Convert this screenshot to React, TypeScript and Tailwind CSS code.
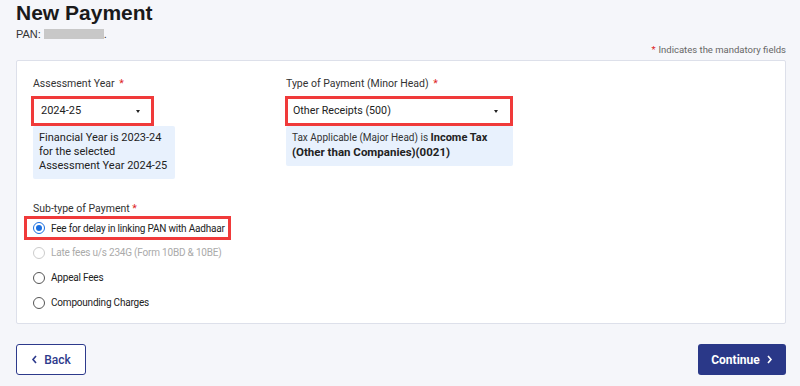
export default function App() {
  const subtypes = [
    { label: "Fee for delay in linking PAN with Aadhaar", checked: true, disabled: false },
    { label: "Late fees u/s 234G (Form 10BD & 10BE)", checked: false, disabled: true },
    { label: "Appeal Fees", checked: false, disabled: false },
    { label: "Compounding Charges", checked: false, disabled: false },
  ];

  return (
    <main
      className="w-[800px] h-[386px] bg-[#f5f6fa] pl-4 overflow-hidden text-[#222]"
      style={{ fontFamily: "Roboto, 'Liberation Sans', sans-serif" }}
    >
      <div className="w-[770px]">
        <h1 className="pt-[1px] text-[21px] leading-[24px] font-bold text-[#1a1a1a] [font-family:'Liberation_Sans',Arial,sans-serif]">
          New Payment
        </h1>
        <div className="flex items-center h-[14px] mt-[2px] text-[11px] text-[#333] [font-family:'Liberation_Sans',Arial,sans-serif]">
          PAN:
          <span className="inline-block ml-[3px] w-[60px] h-[10px] bg-[#c8c8c8]"></span>
          <span>.</span>
        </div>
        <div className="flex justify-end mt-[2px] h-[14px] text-[9.5px] leading-[14px] text-[#666]">
          <span className="text-[#d22] mr-[3px]">*</span>Indicates the mandatory fields
        </div>

        <section className="mt-[3px] h-[264px] bg-white border border-[#dde0ea] rounded-[2px] px-[16px] pt-[16px]">
          <div className="flex">
            <div className="w-[253px]">
              <label className="block text-[10.5px] leading-[14px] text-[#333]">
                Assessment Year <span className="text-[#d22] ml-[2px]">*</span>
              </label>
              <div className="mt-[5px] ml-[-2px] w-[123px] h-[30px] border-[3px] border-[#f03a3a] bg-white flex items-center justify-between px-[7px]">
                <span className="text-[11px] text-[#222]">2024-25</span>
                <span className="w-0 h-0 border-l-[2.5px] border-r-[2.5px] border-t-[3px] border-l-transparent border-r-transparent border-t-[#222] mr-[4px]"></span>
              </div>
              <div className="w-[142px] bg-[#e8f1fd] rounded-[2px] px-[6px] pt-[5px] pb-[6px] text-[11px] leading-[14px] text-[#222]">
                Financial Year is 2023-24
                <br />
                for the selected
                <br />
                Assessment Year 2024-25
              </div>
            </div>
            <div>
              <label className="block text-[10.5px] leading-[14px] text-[#333]">
                Type of Payment (Minor Head) <span className="text-[#d22] ml-[2px]">*</span>
              </label>
              <div className="mt-[5px] ml-[-1px] w-[228px] h-[30px] border-[3px] border-[#f03a3a] bg-white flex items-center justify-between px-[5px]">
                <span className="text-[10.7px] text-[#222]">Other Receipts (500)</span>
                <span className="w-0 h-0 border-l-[2.5px] border-r-[2.5px] border-t-[3px] border-l-transparent border-r-transparent border-t-[#222] mr-[7px]"></span>
              </div>
              <div className="w-[227px] bg-[#e8f1fd] rounded-[2px] px-[6px] pt-[5px] pb-[6px] text-[10px] leading-[14px] text-[#333]">
                Tax Applicable (Major Head) is <b className="text-[11px] text-[#222]">Income Tax</b>
                <br />
                <b className="text-[11.5px] text-[#222]">(Other than Companies)(0021)</b>
              </div>
            </div>
          </div>

          <div className="mt-[23px] text-[10.5px] leading-[14px] text-[#333]">
            Sub-type of Payment <span className="text-[#d22]">*</span>
          </div>
          <div className="flex flex-col">
            {subtypes.map((s, i) => (
              <div
                key={i}
                className={
                  s.checked
                    ? "ml-[-9px] w-[207px] h-[24px] border-[3px] border-[#f03a3a] flex items-center pl-[6px]"
                    : "h-[25px] flex items-center pl-0"
                }
              >
                <span
                  className={
                    s.disabled
                      ? "w-[12px] h-[12px] rounded-full border border-[#ccc] flex items-center justify-center"
                      : s.checked
                      ? "w-[12px] h-[12px] rounded-full border border-[#1a6fe0] flex items-center justify-center"
                      : "w-[12px] h-[12px] rounded-full border border-[#555] flex items-center justify-center"
                  }
                >
                  {s.checked && <span className="w-[6px] h-[6px] rounded-full bg-[#1a6fe0]"></span>}
                </span>
                <span
                  className={
                    s.disabled
                      ? "ml-[6px] whitespace-nowrap text-[10px] tracking-[-0.2px] text-[#aaa]"
                      : "ml-[6px] whitespace-nowrap text-[10px] tracking-[-0.2px] text-[#222]"
                  }
                >
                  {s.label}
                </span>
              </div>
            ))}
          </div>
        </section>

        <div className="flex justify-between mt-[20px]">
          <button className="w-[70px] h-[31px] border border-[#2d3a8c] rounded-[3px] bg-white flex items-center justify-center gap-[6px] text-[12px] text-[#2d3a8c] font-medium">
            <svg width="7" height="9" viewBox="0 0 7 9">
              <path d="M5 1 L2 4.5 L5 8" fill="none" stroke="#2d3a8c" strokeWidth="1.6" />
            </svg>
            Back
          </button>
          <button className="w-[88px] h-[31px] rounded-[3px] bg-[#2a3888] flex items-center justify-center gap-[6px] text-[12px] text-white font-bold">
            Continue
            <svg width="7" height="9" viewBox="0 0 7 9">
              <path d="M2 1 L5 4.5 L2 8" fill="none" stroke="#fff" strokeWidth="1.6" />
            </svg>
          </button>
        </div>
      </div>
    </main>
  );
}
